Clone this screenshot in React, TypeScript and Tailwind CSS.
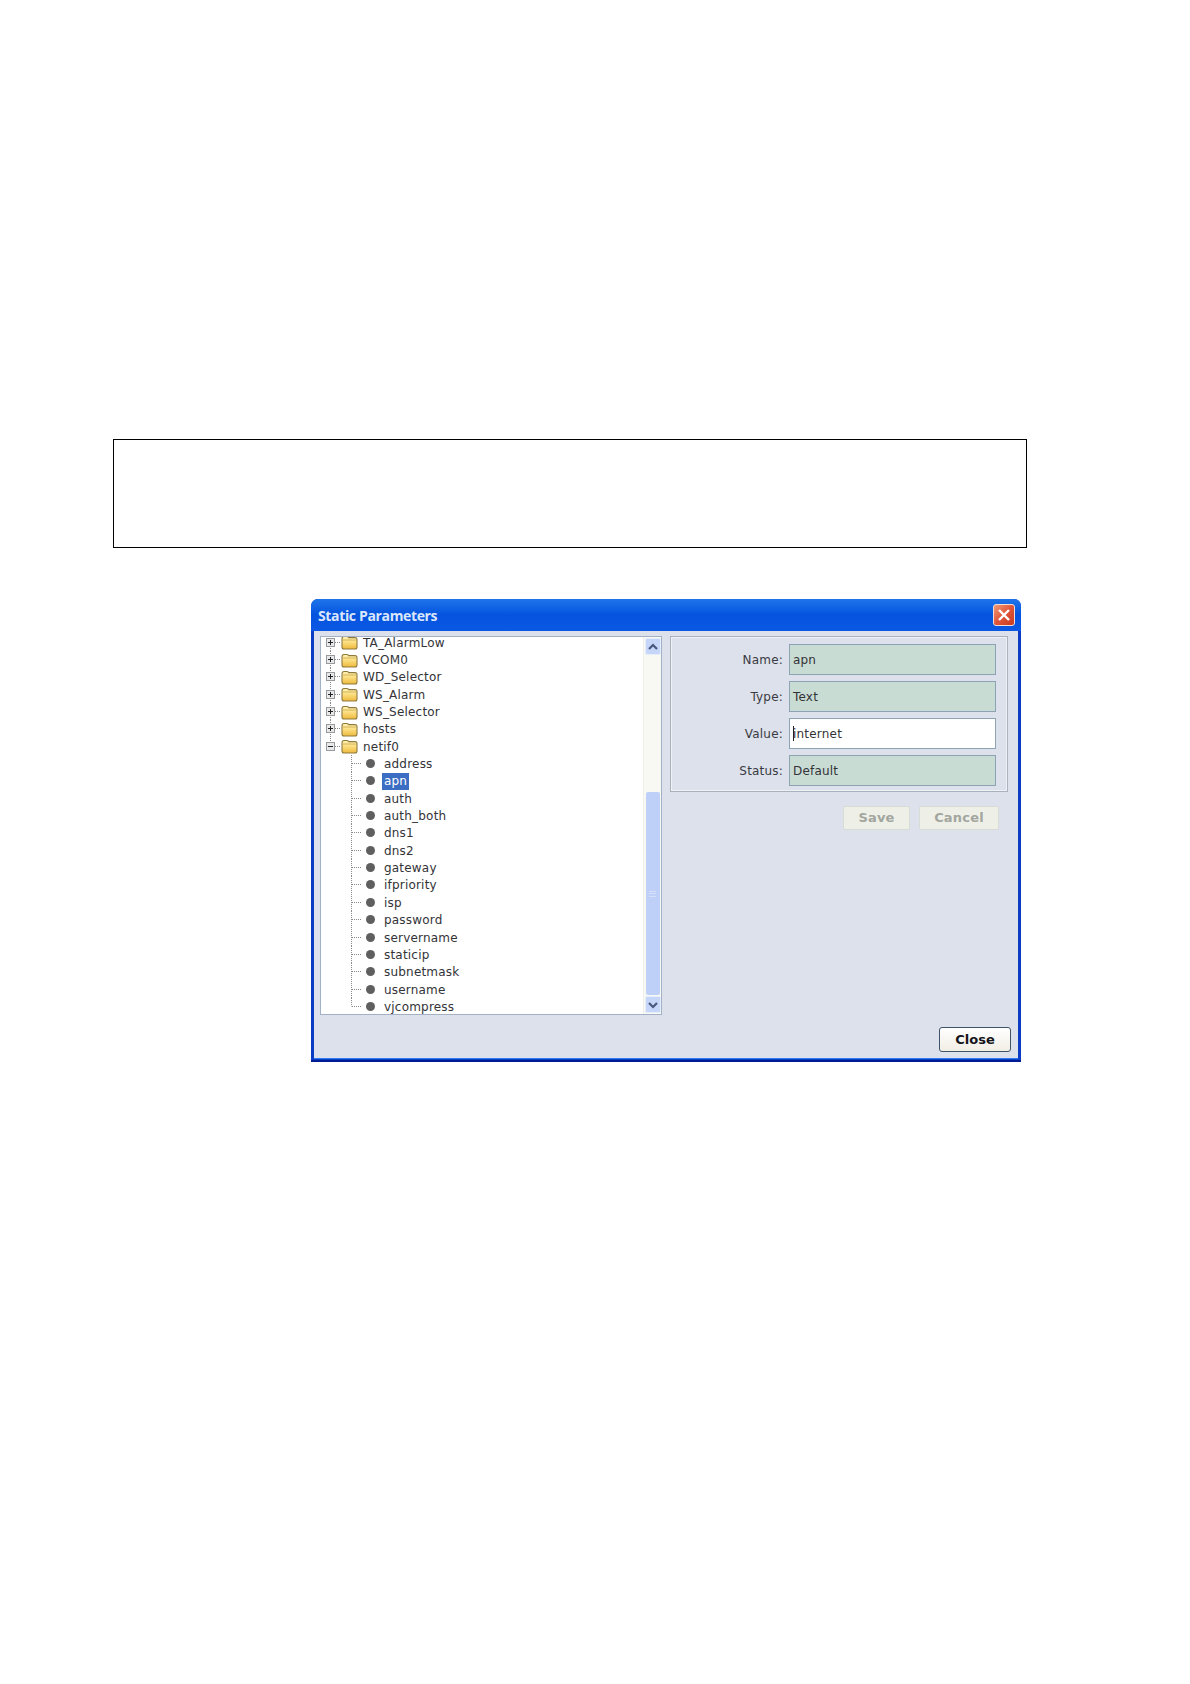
import React from 'react';

const ROW = 'flex items-center h-[17.35px] shrink-0';

const topItems = ['TA_AlarmLow', 'VCOM0', 'WD_Selector', 'WS_Alarm', 'WS_Selector', 'hosts', 'netif0'];
const childItems = ['address', 'apn', 'auth', 'auth_both', 'dns1', 'dns2', 'gateway', 'ifpriority', 'isp', 'password', 'servername', 'staticip', 'subnetmask', 'username', 'vjcompress'];

const Folder = () => (
  <svg width="17" height="15" viewBox="0 0 17 15" className="shrink-0">
    <defs>
      <linearGradient id="folderFill" x1="0" y1="0" x2="0" y2="1">
        <stop offset="0" stopColor="#fff3b8" />
        <stop offset="0.45" stopColor="#fbdf82" />
        <stop offset="1" stopColor="#eeb93c" />
      </linearGradient>
    </defs>
    <path d="M1 4 Q1 1.5 3 1.5 L6 1.5 Q7 1.5 7.6 2.6 L14 2.6 Q16 2.6 16 4.6 L16 12 Q16 14 14 14 L3 14 Q1 14 1 12 Z" fill="url(#folderFill)" stroke="#8f7a3c" strokeWidth="1.1" />
    <path d="M2 5 L15 5" stroke="#c9a64c" strokeWidth="0.8" />
  </svg>
);

const TopRow = ({ label, open, last }: { label: string; open?: boolean; last?: boolean }) => (
  <div className={ROW}>
    <svg width="15" height="18" viewBox="0 0 15 18" className="shrink-0">
      <path d={last ? 'M4.5 0 V5' : 'M4.5 0 V18'} stroke="#8a8a8a" strokeDasharray="1 1" />
      <path d="M9 8.5 H15" stroke="#8a8a8a" strokeDasharray="1 1" />
      <rect x="0.5" y="4.5" width="8" height="8" fill="#e6e8ea" stroke="#9a9a9a" />
      <path d="M2 8.5 H7" stroke="#222" />
      {!open && <path d="M4.5 6 V11" stroke="#222" />}
    </svg>
    <Folder />
    <span className="ml-[5px]">{label}</span>
  </div>
);

const ChildRow = ({ label, last, selected }: { label: string; last?: boolean; selected?: boolean }) => (
  <div className={ROW}>
    <svg width="55" height="18" viewBox="0 0 55 18" className="shrink-0">
      <path d={last ? 'M25.5 0 V8.5' : 'M25.5 0 V18'} stroke="#8a8a8a" strokeDasharray="1 1" />
      <path d="M26 8.5 H36" stroke="#8a8a8a" strokeDasharray="1 1" />
      <circle cx="44.5" cy="8.5" r="4.5" fill="#5f5f5f" />
    </svg>
    <span className={selected ? 'ml-[1px] px-[2px] h-[17px] leading-[17px] bg-[#3b6dc2] text-white' : 'ml-[3px]'}>{label}</span>
  </div>
);

const Chevron = ({ up }: { up?: boolean }) => (
  <svg width="10" height="8" viewBox="0 0 10 8">
    <path d={up ? 'M1 6 L5 2 L9 6' : 'M1 2 L5 6 L9 2'} fill="none" stroke="#46587e" strokeWidth="2.2" />
  </svg>
);

const Field = ({ label, value, editable }: { label: string; value: string; editable?: boolean }) => (
  <div className="flex items-center h-[31px]">
    <div className="w-[112px] text-right text-[#3a3a42] shrink-0">{label}</div>
    <div className={`ml-[6px] w-[207px] h-full flex items-center pl-[3px] border border-[#8ea2b5] ${editable ? 'bg-white' : 'bg-[#c9dcd4]'}`}>
      {editable && <span className="w-[1px] h-[15px] bg-[#222] -mr-[1px]" />}
      <span>{value}</span>
    </div>
  </div>
);

export default function App() {
  return (
    <div className="min-h-[1684px] bg-white pt-[439px] font-['DejaVu_Sans',sans-serif] text-[12px] tracking-[0.2px] text-[#333338]">
      <div className="ml-[113px] w-[914px] h-[109px] border-[1.5px] border-black" />

      <div className="mt-[51px] ml-[311px] w-[710px] h-[463px] flex flex-col rounded-t-[7px] overflow-hidden bg-[#0a3cc4] border-b-[2px] border-[#001c94]">
        <div className="h-[32px] shrink-0 flex items-center justify-between pl-[7px] pr-[6px] bg-gradient-to-b from-[#1f74ea] via-[#0553df] to-[#0a58e4]">
          <span className="pt-[1px] font-['Open_Sans',sans-serif] font-bold text-[14px] tracking-[-0.35px] text-[#dbe7fb]">Static Parameters</span>
          <div className="w-[22px] h-[22px] flex items-center justify-center rounded-[3px] border border-[#f4ddd2] bg-gradient-to-br from-[#ee9a78] via-[#e0553a] to-[#c83a20]">
            <svg width="14" height="14" viewBox="0 0 14 14">
              <path d="M2 2 L12 12 M12 2 L2 12" stroke="#fff" strokeWidth="2.4" />
            </svg>
          </div>
        </div>

        <div className="flex-1 flex flex-col mx-[3px] mb-[1px] bg-[#dce1eb] border-b-[1px] border-[#2e7cf0] pl-[6px] pr-[7px]">
          <div className="flex mt-[5px] gap-[8px] mr-[3px]">
            <div className="w-[342px] h-[379px] flex bg-white border border-[#a3b1c6]">
              <div className="flex-1 overflow-hidden pl-[5px]">
                <div className="-mt-[3px] flex flex-col">
                  {topItems.map((t, i) => (
                    <TopRow key={t} label={t} open={t === 'netif0'} last={i === topItems.length - 1} />
                  ))}
                  {childItems.map((c, i) => (
                    <ChildRow key={c} label={c} selected={c === 'apn'} last={i === childItems.length - 1} />
                  ))}
                </div>
              </div>
              <div className="w-[18px] shrink-0 flex flex-col items-center bg-[#f9f9f3] border-l border-[#f0f0ea]">
                <div className="mt-[1px] w-[16px] h-[17px] flex items-center justify-center rounded-[2px] bg-[#c6d6f8] border border-[#e6edfb]">
                  <Chevron up />
                </div>
                <div className="mt-[137px] w-[14px] h-[203px] flex items-center justify-center rounded-[2px] bg-[#bfd0f8]">
                  <div className="w-[7px] h-[6px] border-y border-[#d5e0f8] bg-[linear-gradient(#d5e0f8,#d5e0f8)] bg-[length:100%_1px] bg-center bg-no-repeat" />
                </div>
                <div className="mt-[1px] w-[16px] h-[17px] flex items-center justify-center rounded-[2px] bg-[#c6d6f8] border border-[#e6edfb]">
                  <Chevron />
                </div>
              </div>
            </div>

            <div className="flex-1 flex flex-col">
              <div className="h-[156px] border border-[#a9b2ba] shadow-[inset_0_0_0_1px_#eef1f5] pt-[7px] flex flex-col gap-[6px]">
                <Field label="Name:" value="apn" />
                <Field label="Type:" value="Text" />
                <Field label="Value:" value="internet" editable />
                <Field label="Status:" value="Default" />
              </div>
              <div className="mt-[14px] mr-[9px] flex justify-end gap-[9px]">
                <button className="w-[67px] h-[24px] rounded-[2px] bg-[#eef0e8] border border-[#d8dcd6] font-bold text-[13px] text-[#a3a69e]">Save</button>
                <button className="w-[80px] h-[24px] rounded-[2px] bg-[#eef0e8] border border-[#d8dcd6] font-bold text-[13px] text-[#a3a69e]">Cancel</button>
              </div>
            </div>
          </div>

          <div className="mt-[12px] flex justify-end">
            <button className="w-[72px] h-[25px] rounded-[3px] border border-[#3f5468] bg-gradient-to-b from-white to-[#f1eee4] font-bold text-[13px] tracking-normal text-[#14141c]">Close</button>
          </div>
        </div>
      </div>
    </div>
  );
}
